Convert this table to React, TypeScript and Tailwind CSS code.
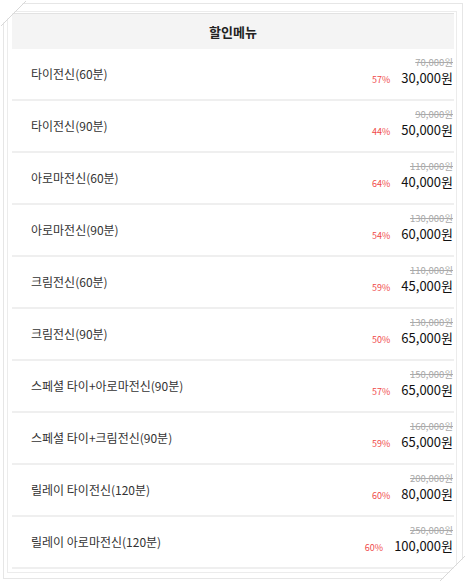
const items = [
  { name: '타이전신(60분)', orig: '70,000원', pct: '57%', price: '30,000원' },
  { name: '타이전신(90분)', orig: '90,000원', pct: '44%', price: '50,000원' },
  { name: '아로마전신(60분)', orig: '110,000원', pct: '64%', price: '40,000원' },
  { name: '아로마전신(90분)', orig: '130,000원', pct: '54%', price: '60,000원' },
  { name: '크림전신(60분)', orig: '110,000원', pct: '59%', price: '45,000원' },
  { name: '크림전신(90분)', orig: '130,000원', pct: '50%', price: '65,000원' },
  { name: '스페셜 타이+아로마전신(90분)', orig: '150,000원', pct: '57%', price: '65,000원' },
  { name: '스페셜 타이+크림전신(90분)', orig: '160,000원', pct: '59%', price: '65,000원' },
  { name: '릴레이 타이전신(120분)', orig: '200,000원', pct: '60%', price: '80,000원' },
  { name: '릴레이 아로마전신(120분)', orig: '250,000원', pct: '60%', price: '100,000원' },
];

const MenuRow = ({ item }: { item: (typeof items)[number] }) => (
  <div className="flex h-[52px] items-center justify-between border-b-2 border-[#efefef] pl-[19px] pr-[1px]">
    <span className="text-[12px] text-[#333]">{item.name}</span>
    <div className="flex flex-col items-end pb-[5px]">
      <span className="text-[9.5px] leading-[12px] text-[#aaa] line-through">{item.orig}</span>
      <div className="flex items-baseline gap-[11px]">
        <span className="text-[9px] text-[#f04a4a]">{item.pct}</span>
        <span className="text-[13px] leading-[20px] text-[#111]">{item.price}</span>
      </div>
    </div>
  </div>
);

export default function App() {
  return (
    <div
      className="relative h-[582px] w-[466px] bg-white p-[3px]"
      style={{ fontFamily: '"Noto Sans CJK KR", "Noto Sans", sans-serif' }}
    >
      <div className="h-full border border-[#e6e6e6] pt-[7px] pl-[3px] pr-[5px] pb-[5px]">
        <div className="h-full border border-[#ececec] pt-[1px] pl-[4px] pr-[2px]">
          <div className="flex h-[36px] items-center justify-center border-t border-[#e2e2e2] bg-[#f4f4f4]">
            <span className="text-[13px] font-bold text-[#222]">할인메뉴</span>
          </div>
          {items.map((item) => (
            <MenuRow key={item.name} item={item} />
          ))}
        </div>
      </div>
      <svg className="absolute left-0 top-0" width="30" height="30">
        <polygon points="0,0 26,0 0,26" fill="white" />
        <line x1="26" y1="1" x2="1" y2="26" stroke="#d8d8d8" strokeWidth="1" />
      </svg>
      <svg className="absolute bottom-0 right-0" width="30" height="30">
        <polygon points="30,30 30,4 4,30" fill="white" />
        <line x1="29" y1="4" x2="4" y2="29" stroke="#d8d8d8" strokeWidth="1" />
      </svg>
    </div>
  );
}
